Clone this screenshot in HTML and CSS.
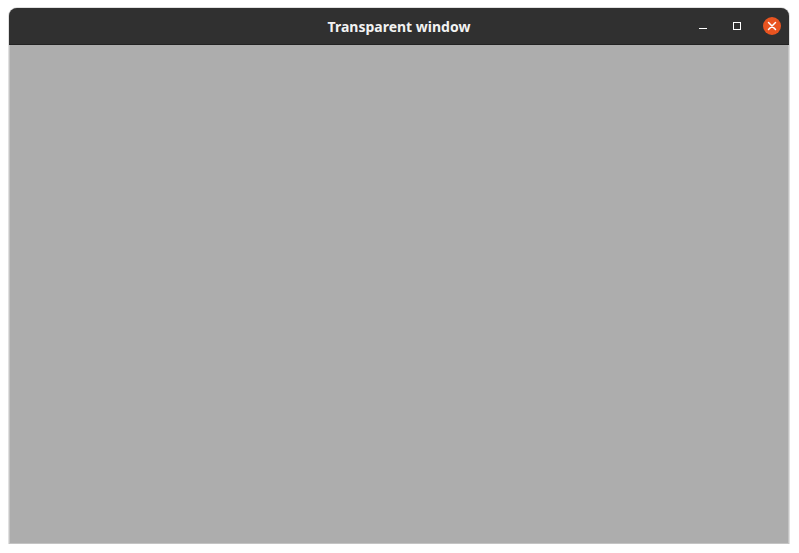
FILE: index.html
```html
<!DOCTYPE html>
<html>
<head>
<meta charset="utf-8">
<link rel="stylesheet" href="styles.css">
</head>
<body>
<div class="window">
  <div class="titlebar">
    <div class="title">Transparent window</div>
    <div class="controls">
      <span class="btn min"><svg width="10" height="10" viewBox="0 0 10 10"><rect x="1" y="7" width="8" height="1" fill="#fff"/></svg></span>
      <span class="btn max"><svg width="10" height="10" viewBox="0 0 10 10"><rect x="1.5" y="1.5" width="7" height="7" fill="none" stroke="#fff" stroke-width="1"/></svg></span>
      <span class="btn close"><svg width="20" height="20" viewBox="0 0 20 20"><circle cx="10" cy="10" r="9" fill="#e95420"/><path d="M6.5 6.5 L13.5 13.5 M13.5 6.5 L6.5 13.5" stroke="#fff" stroke-width="1.5" stroke-linecap="round"/></svg></span>
    </div>
  </div>
  <div class="content"></div>
</div>
</body>
</html>
```
FILE: styles.css
```css
html, body { margin: 0; padding: 0; background: #ffffff; }
body { padding: 8px 10px 0 9px; }
.window {
  width: 780px;
  height: 536px;
  display: flex;
  flex-direction: column;
  border-radius: 8px 8px 0 0;
  overflow: hidden;
  box-shadow: 0 0 0 1px rgba(0,0,0,0.12);
  background: #adadad;
}
.titlebar {
  height: 36px;
  flex: none;
  background: #303030;
  border-bottom: 1px solid #222222;
  display: flex;
  align-items: center;
  justify-content: center;
  position: relative;
}
.title {
  font-family: "Noto Sans", "DejaVu Sans", sans-serif;
  font-weight: 700;
  font-size: 14px;
  color: #f2f2f2;
  letter-spacing: 0;
}
.controls {
  position: absolute;
  right: 7px;
  top: 8px;
  display: flex;
  align-items: center;
  gap: 14px;
}
.btn { display: flex; align-items: center; justify-content: center; }
.btn svg { display: block; }
.min { width: 10px; }
.max { width: 10px; margin-left: 10px; }
.close { margin-left: 6px; }
.content {
  flex: 1;
  background: #adadad;
  border-left: 1px solid #c4c4c4;
  border-right: 1px solid #c4c4c4;
  border-bottom: 1px solid #c4c4c4;
}
```
